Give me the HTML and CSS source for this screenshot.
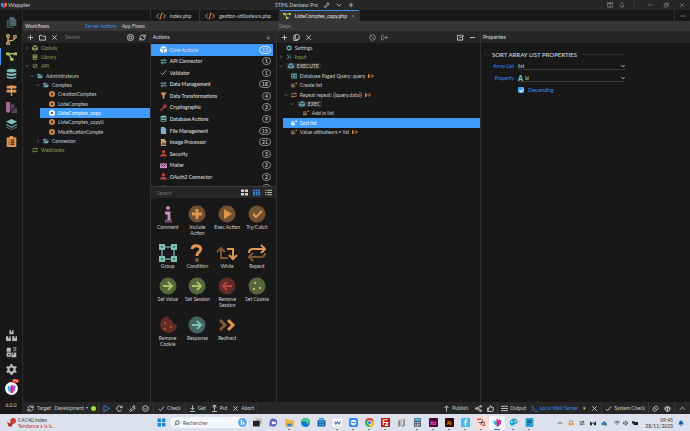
FILE: index.html
```html
<!DOCTYPE html>
<html lang="en">
<head>
    <meta charset="UTF-8">
    <meta name="viewport" content="width=device-width, initial-scale=1.0">
    <title>Wappler</title>
    <link rel="stylesheet" href="styles.css">
</head>
<body>
    <svg class="sprite" aria-hidden="true">
        <symbol id="plus" viewBox="0 0 16 16"><path d="M8 2v12M2 8h12"/></symbol>
        <symbol id="close" viewBox="0 0 16 16"><path d="M3 3l10 10M13 3L3 13"/></symbol>
        <symbol id="minus" viewBox="0 0 16 16"><path d="M2 8h12"/></symbol>
        <symbol id="down" viewBox="0 0 16 16"><path d="M2 5l6 6 6-6"/></symbol>
        <symbol id="right" viewBox="0 0 16 16"><path d="M5 2l6 6-6 6"/></symbol>
        <symbol id="up" viewBox="0 0 16 16"><path d="M2 11l6-6 6 6"/></symbol>
        <symbol id="check" viewBox="0 0 16 16"><path d="M2 9l4 4 8-10"/></symbol>
        <symbol id="pencil" viewBox="0 0 16 16"><path d="M2 14l1-4 8-8 3 3-8 8zM9 4l3 3"/></symbol>
        <symbol id="copy" viewBox="0 0 16 16"><path d="M5 1h6l3 3v8H5zM5 4H2v11h8v-3"/></symbol>
        <symbol id="refresh" viewBox="0 0 16 16"><path d="M2 8a6 6 0 0 1 11-3M14 1v5H9M14 8a6 6 0 0 1-11 3M2 15v-5h5"/></symbol>
        <symbol id="redo" viewBox="0 0 16 16"><path d="M13 11a6 6 0 1 1-1-7M14 1v5H9"/></symbol>
        <symbol id="folder" viewBox="0 0 16 16"><path d="M1 3h5l2 2h7v9H1z"/></symbol>
        <symbol id="folder-open" viewBox="0 0 16 16"><path class="fill" d="M1 2h5l2 2h5v2H4l-3 6zM4 7h12l-3 7H1z"/></symbol>
        <symbol id="target" viewBox="0 0 16 16"><circle cx="8" cy="8" r="7"/><circle cx="8" cy="8" r="3"/></symbol>
        <symbol id="code" viewBox="0 0 20 16"><path d="M6 3L1 8l5 5M14 3l5 5-5 5M12 1L8 15"/></symbol>
        <symbol id="flow" viewBox="0 0 16 16"><path class="fill" d="M0 2h5v4H0zM11 2h5v4h-5zM6 10h5v4H6z"/><path d="M5 4h6M4 5l4 6"/></symbol>
        <symbol id="cube" viewBox="0 0 16 16"><path class="fill" d="M8 0l7 3-7 3-7-3zM0 5l7 3v8l-7-4zM16 5v7l-7 4V8z"/></symbol>
        <symbol id="swap" viewBox="0 0 16 16"><path d="M1 5h12M10 2l3 3-3 3M15 11H3M6 8l-3 3 3 3"/></symbol>
        <symbol id="loop" viewBox="0 0 16 16"><path d="M1 8V6q0-2 3-2h10M11 1l3 3-3 3M15 8v2q0 2-3 2H2M5 9l-3 3 3 3"/></symbol>
        <symbol id="book" viewBox="0 0 16 16"><path class="fill" fill-rule="evenodd" d="M2 1h12v14H2zM5 4v2h7V4zM4 11v2h9v-2z"/></symbol>
        <symbol id="play" viewBox="0 0 16 16"><circle class="fill" cx="8" cy="8" r="8"/><path class="hole" d="M6 4l6 4-6 4z"/></symbol>
        <symbol id="db" viewBox="0 0 16 16"><path class="fill" d="M1 3q7-4 14 0v2q-7 3-14 0zM1 7q7 3 14 0v3q-7 3-14 0zM1 12q7 3 14 0v2q-7 3-14 0z"/></symbol>
        <symbol id="user" viewBox="0 0 16 16"><circle class="fill" cx="8" cy="4" r="4"/><path class="fill" d="M0 15q0-6 5-6h6q5 0 5 6z"/></symbol>
        <symbol id="list" viewBox="0 0 16 16"><path d="M0 3h3M5 3h11M0 8h3M5 8h11M0 13h3M5 13h11"/></symbol>
        <symbol id="menu" viewBox="0 0 16 16"><path d="M0 3h16M0 8h16M0 13h16"/></symbol>
        <symbol id="step" viewBox="0 0 16 16"><path class="fill" d="M0 4h9v2H0zM0 7h11v3H0zM0 11h11v3H0zM12 1h4v4h-4z"/></symbol>
        <symbol id="out" viewBox="0 0 16 16"><path class="fill" d="M0 3h4v10H0z"/><path d="M5 8h9M10 3l5 5-5 5"/></symbol>
        <symbol id="gear" viewBox="0 0 16 16"><circle cx="8" cy="8" r="4.500" class="thick"/><path class="thick" d="M8 0v3M8 13v3M1 4l3 2M12 10l3 2M1 12l3-2M12 6l3-2"/></symbol>
        <symbol id="arrow" viewBox="0 0 18 18"><circle class="fill" cx="9" cy="9" r="8.500" opacity=".45"/><path d="M4 9h9M9 5l4 4-4 4"/></symbol>
    </svg>

    <header class="titlebar">
        <div class="brand">
            <svg class="logo" viewBox="0 0 16 16"><path fill="#29b6f6" d="M0 2l7 3v10l-6-4z"/><path fill="#e91e63" d="M6 1l5 3v10l-4 2z"/><path fill="#ff9800" d="M11 1l5 3-1 8-4 2z"/></svg>
            Wappler
        </div>
        <div class="project">
            STIHL Deviseur Pro
            <button aria-label="Edit project"><svg><use href="#pencil"/></svg></button>
            <button aria-label="Projects"><svg><use href="#down"/></svg></button>
            <button aria-label="New project"><svg><use href="#plus"/></svg></button>
        </div>
        <div class="window-buttons">
            <button aria-label="Layout"><svg viewBox="0 0 16 16"><path d="M1 2h14v12H1zM8 2v12M1 4h14"/></svg></button>
            <button aria-label="Theme"><svg viewBox="0 0 16 16"><path d="M8 1q6 6 4 11-4 5-8 0-2-5 4-11zM6 11q2 2 4 0"/></svg></button>
            <button aria-label="More"><svg viewBox="0 0 16 16"><path d="M8 2v2M8 7v2M8 12v2"/></svg></button>
            <button aria-label="Minimize"><svg><use href="#minus"/></svg></button>
            <button aria-label="Restore"><svg viewBox="0 0 16 16"><path d="M3 6h8v7H3zM6 6V3h8v7h-3"/></svg></button>
            <button aria-label="Close"><svg><use href="#close"/></svg></button>
        </div>
    </header>

    <div class="app">
        <nav class="sidebar">
            <button aria-label="Files" class="slate"><svg viewBox="0 0 16 16"><path class="fill" opacity=".5" d="M1 4h3v10h8v2H1z"/><path class="fill" opacity=".7" d="M5 0h6l4 4v9H5z"/></svg></button>
            <button aria-label="Git" class="sand"><svg viewBox="0 0 16 16"><circle cx="3" cy="3" r="2"/><circle cx="13" cy="4" r="2"/><circle cx="3" cy="14" r="2"/><path d="M3 5v7M3 10q9 0 10-4"/></svg></button>
            <button aria-label="Workflows" class="lime active"><svg><use href="#flow"/></svg></button>
            <button aria-label="Databases" class="teal"><svg><use href="#db"/></svg></button>
            <button aria-label="Routes" class="orange"><svg viewBox="0 0 16 16"><path class="fill" d="M1 1h13l2 2-2 2H1zM2 7h13v4H2L0 9zM7 0h2v16H7z"/></svg></button>
            <button aria-label="Styles" class="purple"><svg viewBox="0 0 16 16"><path class="fill" d="M0 0h6v14q-3 3-6 0z"/><path class="fill" opacity=".5" d="M7 4l3-2 3 4-6 7zM13 9h3v7H7z"/></svg></button>
            <button aria-label="Layers" class="teal"><svg viewBox="0 0 16 16"><path class="fill" d="M8 0l8 4-8 4-8-4z"/><path class="fill" opacity=".7" d="M0 7l8 4 8-4v2l-8 4-8-4zM0 11l8 4 8-4v1l-8 4-8-4z"/></svg></button>
            <button aria-label="Tasks" class="orange"><svg viewBox="0 0 16 16"><path class="fill" d="M1 2h4l1-2h4l1 2h4v14H1z"/><path stroke="#4a2c10" d="M4 6h1M7 6h5M4 9h1M7 9h5M4 12h1M7 12h5"/></svg></button>
            <button aria-label="Extensions" class="gray bottom"><svg viewBox="0 0 16 16"><path class="fill" d="M5 0h6v6H5zM0 9h7v7H0zM9 9h7v7H9z"/><path stroke="#181818" d="M8 0v3M4 9v3M13 9v3"/></svg></button>
            <button aria-label="Updates" class="gray"><svg viewBox="0 0 16 16"><path class="fill" d="M1 1h6v6H1zM1 8h6v6H1zM8 8h7v7H8z"/><path opacity=".6" d="M10 1h4v4h-4"/><path stroke="#181818" d="M11 8v3M4 10v2"/></svg></button>
            <button aria-label="Settings" class="gray"><svg><use href="#gear"/></svg></button>
            <button aria-label="Account" class="account"><svg viewBox="0 0 16 16"><circle cx="8" cy="8" r="8" fill="#fff" stroke="none"/><path fill="#29b6f6" stroke="none" d="M3 4l4 2v7l-3-2z"/><path fill="#e91e90" stroke="none" d="M7 3l3 2v8l-3 1z"/><path fill="#7b5cff" stroke="none" d="M10 4l3 1-1 6-2 1z"/></svg><span class="badge">Pro</span></button>
            <span class="version">6.0.0</span>
        </nav>

        <div class="workspace">
            <div class="columns">
                <section class="workflows">
                    <div class="tabs"></div>
                    <div class="strip">
                        <b>Workflows</b>
                        <a href="#" class="link push">Server Actions</a>
                        <a href="#">App Flows</a>
                    </div>
                    <div class="toolbar">
                        <button aria-label="Add"><svg><use href="#plus"/></svg></button>
                        <button aria-label="New folder"><svg><use href="#folder"/></svg></button>
                        <button aria-label="Delete"><svg><use href="#close"/></svg></button>
                        <input type="text" placeholder="Search" aria-label="Search workflows">
                        <button aria-label="Settings"><svg><use href="#target"/></svg></button>
                        <button aria-label="Refresh"><svg><use href="#refresh"/></svg></button>
                    </div>
                    <ul class="tree files">
                        <li class="green"><svg class="caret"><use href="#right"/></svg><svg><use href="#cube"/></svg>Globals</li>
                        <li class="green"><i class="caret"></i><svg><use href="#book"/></svg>Library</li>
                        <li class="green"><svg class="caret"><use href="#down"/></svg><svg><use href="#swap"/></svg>API</li>
                        <li class="level1 dir"><svg class="caret"><use href="#down"/></svg><svg><use href="#folder-open"/></svg>Adminitrateurs</li>
                        <li class="level2 dir"><svg class="caret"><use href="#down"/></svg><svg><use href="#folder-open"/></svg>Comptes</li>
                        <li class="level3 action"><i class="caret"></i><svg><use href="#play"/></svg>CreationComptes</li>
                        <li class="level3 action"><i class="caret"></i><svg><use href="#play"/></svg>ListeComptes</li>
                        <li class="level3 action selected"><i class="caret"></i><svg><use href="#play"/></svg>ListeComptes_copy</li>
                        <li class="level3 action"><i class="caret"></i><svg><use href="#play"/></svg>ListeComptes_copy0</li>
                        <li class="level3 action"><i class="caret"></i><svg><use href="#play"/></svg>ModificationCompte</li>
                        <li class="level2 dir"><svg class="caret"><use href="#right"/></svg><svg><use href="#folder-open"/></svg>Connexion</li>
                        <li class="green"><i class="caret"></i><svg><use href="#loop"/></svg>Webhooks</li>
                    </ul>
                </section>

                <div class="editor">
                    <div class="tabs">
                        <button class="tab"><svg><use href="#code"/></svg>index.php</button>
                        <button class="tab"><svg><use href="#code"/></svg>gestion-utilisateurs.php</button>
                        <button class="tab active"><svg><use href="#flow"/></svg>ListeComptes_copy.php<svg class="x"><use href="#close"/></svg></button>
                        <button class="more" aria-label="More tabs"><svg viewBox="0 0 16 16"><path d="M1 8h3M6 8h3M11 8h3"/></svg></button>
                    </div>
                    <div class="panels">
                        <section class="actions">
                            <div class="strip"></div>
                            <div class="toolbar title"><b>Actions</b><button class="push collapse" aria-label="Collapse">«</button></div>
                            <div class="group-list">
                                <ul class="groups">
                                    <li class="selected"><svg><use href="#cube"/></svg>Core Actions<span>15</span></li>
                                    <li class="teal"><svg><use href="#swap"/></svg>API Connector<span>1</span></li>
                                    <li class="teal"><svg><use href="#check"/></svg>Validator<span>1</span></li>
                                    <li class="teal"><svg><use href="#swap"/></svg>Data Management<span>18</span></li>
                                    <li class="orange"><svg viewBox="0 0 16 16"><path class="fill" d="M1 1h14l-5 7v8l-4-2V8z"/></svg>Data Transformations<span>4</span></li>
                                    <li class="red"><svg viewBox="0 0 16 16"><circle cx="11" cy="5" r="3" class="thick"/><path class="thick" d="M8 8l-7 7"/></svg>Cryptographic<span>3</span></li>
                                    <li class="teal"><svg><use href="#db"/></svg>Database Actions<span>9</span></li>
                                    <li class="blue"><svg viewBox="0 0 16 16"><path class="fill" d="M2 0h8l4 5v11H2z"/></svg>File Management<span>15</span></li>
                                    <li class="sand"><svg viewBox="0 0 16 16"><path class="fill" d="M2 0h8l4 5v11H2z"/><path stroke="#5a4420" d="M4 13l3-4 2 2 2-3 2 5zM5 5h1"/></svg>Image Processor<span>21</span></li>
                                    <li class="red"><svg><use href="#user"/></svg>Security<span>3</span></li>
                                    <li class="pink"><svg viewBox="0 0 16 16"><path class="fill" d="M0 3h16v11H0z"/><path stroke="#3a2338" d="M1 4l7 6 7-6"/></svg>Mailer<span>2</span></li>
                                    <li class="red"><svg><use href="#user"/></svg>OAuth2 Connector<span>2</span></li>
                                    <li class="red"><svg><use href="#redo"/></svg>reCAPTCHA Actions<span>1</span></li>
                                </ul>
                            </div>
                            <div class="toolbar filter">
                                <input type="text" placeholder="Search" aria-label="Search actions">
                                <button aria-label="Large icons"><svg viewBox="0 0 16 16"><path class="fill" d="M0 1h7v6H0zM9 1h7v6H9zM0 9h7v6H0zM9 9h7v6H9z"/></svg></button>
                                <button aria-label="Small icons" class="link"><svg viewBox="0 0 16 16"><path class="fill" d="M0 1h4v4H0zM6 1h4v4H6zM12 1h4v4h-4zM0 6h4v4H0zM6 6h4v4H6zM12 6h4v4h-4zM0 11h4v4H0zM6 11h4v4H6zM12 11h4v4h-4z"/></svg></button>
                                <button aria-label="List"><svg><use href="#list"/></svg></button>
                            </div>
                            <div class="palette">
                                <button class="pink"><svg viewBox="0 0 18 18"><circle class="fill" cx="9" cy="3" r="2"/><path class="thick" d="M6 8h4v7"/><path d="M6 16h7" class="thick" opacity=".5"/></svg>Comment</button>
                                <button class="orange"><svg viewBox="0 0 18 18"><circle class="fill" cx="9" cy="9" r="8.500" opacity=".45"/><path class="thick" d="M9 4v10M4 9h10"/></svg>Include Action</button>
                                <button class="orange"><svg viewBox="0 0 18 18"><circle class="fill" cx="9" cy="9" r="8.500" opacity=".45"/><path class="fill" d="M6 4l8 5-8 5z"/></svg>Exec Action</button>
                                <button class="orange"><svg viewBox="0 0 18 18"><circle class="fill" cx="9" cy="9" r="8.500" opacity=".45"/><path d="M5 9l3 3 6-6"/></svg>Try/Catch</button>
                                <button class="teal"><svg viewBox="0 0 18 18"><path opacity=".6" d="M3 3h12v12H3z"/><path class="fill" fill-rule="evenodd" d="M0 0h6v6H0zM2 2v2h2V2zM12 0h6v6h-6zM14 2v2h2V2zM0 12h6v6H0zM2 14v2h2v-2zM12 12h6v6h-6zM14 14v2h2v-2z"/></svg>Group</button>
                                <button class="orange"><svg viewBox="0 0 18 18"><path class="thick" d="M4 5q1-4 6-3 5 2 1 6-2 1-2 4"/><circle class="fill" cx="9" cy="16" r="2" opacity=".5"/></svg>Condition</button>
                                <button class="orange"><svg class="while" viewBox="0 0 22 18"><path opacity=".5" d="M1 8l4-4 4 4M5 5v9h7"/><path d="M11 5h6v9M13 11l4 4 4-4"/></svg>While</button>
                                <button class="orange"><svg viewBox="0 0 18 18"><path d="M1 9q0-4 4-4h11M13 1l4 4-4 4"/><path opacity=".5" d="M17 9q0 4-4 4H2M5 9l-4 4 4 4"/></svg>Repeat</button>
                                <button class="lime"><svg><use href="#arrow"/></svg>Set Value</button>
                                <button class="lime"><svg><use href="#arrow"/></svg>Set Session</button>
                                <button class="red"><svg viewBox="0 0 18 18"><circle class="fill" cx="9" cy="9" r="8.500" opacity=".45"/><path d="M14 9H5M9 5L5 9l4 4"/></svg>Remove Session</button>
                                <button class="lime"><svg viewBox="0 0 18 18"><circle class="fill" cx="9" cy="9" r="8.500" opacity=".45"/><path class="fill" d="M6 5h2v2H6zM5 11h2v2H5zM11 10h2v2h-2z"/></svg>Set Cookie</button>
                                <button class="red"><svg viewBox="0 0 18 18"><path class="fill" opacity=".45" d="M9 0q1 4 4 4 0 4 5 5a8.500 8.500 0 1 1-9-9z"/><path class="fill" d="M5 6h2v2H5zM5 12h2v2H5zM11 10h2v2h-2z"/></svg>Remove Cookie</button>
                                <button class="teal"><svg><use href="#arrow"/></svg>Response</button>
                                <button class="orange"><svg viewBox="0 0 18 18"><path opacity=".5" d="M2 4l5 5-5 5" class="thick"/><path d="M10 4l5 5-5 5" class="thick"/></svg>Redirect</button>
                            </div>
                        </section>

                        <section class="steps">
                            <div class="strip muted">Steps</div>
                            <div class="toolbar">
                                <button aria-label="Add step"><svg><use href="#plus"/></svg></button>
                                <button aria-label="Copy"><svg><use href="#copy"/></svg></button>
                                <button aria-label="Delete step"><svg><use href="#close"/></svg></button>
                                <div class="middle">
                                    <button aria-label="Disable" class="dim"><svg viewBox="0 0 16 16"><circle cx="8" cy="8" r="6.500"/><path d="M3 3l10 10"/></svg></button>
                                    <button aria-label="Output" class="dim"><svg viewBox="0 0 16 16"><path d="M7 3H1v10h6M5 8h10M11 4l4 4-4 4"/></svg></button>
                                </div>
                                <button aria-label="Open in browser"><svg viewBox="0 0 16 16"><path d="M9 3H1v11h12V9M6 10q1-4 8-5M11 1l4 4-4 4"/></svg></button>
                                <button aria-label="Collapse steps"><svg><use href="#minus"/></svg></button>
                            </div>
                            <ul class="tree">
                                <li class="cyan"><i class="caret"></i><svg><use href="#gear"/></svg>Settings</li>
                                <li class="cyan input"><svg class="caret"><use href="#right"/></svg><svg viewBox="0 0 16 16"><path d="M2 2l6 6-6 6M8 2l6 6-6 6"/></svg><span>Input</span></li>
                                <li class="cyan"><svg class="caret"><use href="#down"/></svg><span class="chip"><svg><use href="#cube"/></svg>EXECUTE</span></li>
                                <li class="cyan level1"><i class="caret"></i><svg viewBox="0 0 16 16"><path d="M1 2h14v12H1zM1 4h14M1 9h14M6 4v10M10 4v10"/></svg>Database Paged Query: query<svg class="out"><use href="#out"/></svg></li>
                                <li class="brown level1"><i class="caret"></i><svg><use href="#step"/></svg>Create list</li>
                                <li class="orange-icon level1"><svg class="caret"><use href="#down"/></svg><svg><use href="#loop"/></svg>Repeat repeat: {{query.data}}<svg class="out"><use href="#out"/></svg></li>
                                <li class="cyan level2"><svg class="caret"><use href="#down"/></svg><span class="chip"><svg><use href="#cube"/></svg>EXEC</span></li>
                                <li class="brown level3"><i class="caret"></i><svg><use href="#step"/></svg>Add in list</li>
                                <li class="brown level1 selected"><i class="caret"></i><svg><use href="#step"/></svg>Sort list</li>
                                <li class="brown level1"><i class="caret"></i><svg><use href="#step"/></svg>Value utilisateurs = list<svg class="out"><use href="#out"/></svg></li>
                            </ul>
                        </section>

                        <section class="properties">
                            <div class="strip"></div>
                            <div class="toolbar title"><b>Properties</b></div>
                            <form class="form">
                                <h2>SORT ARRAY LIST PROPERTIES</h2>
                                <div class="field">
                                    <label for="array-list">Array List</label>
                                    <div class="select"><select id="array-list"><option>list</option></select><svg><use href="#down"/></svg></div>
                                </div>
                                <div class="field">
                                    <label for="property">Property</label>
                                    <div class="select"><b class="type">A</b><select id="property"><option>id</option></select><svg><use href="#down"/></svg></div>
                                </div>
                                <div class="field">
                                    <input type="checkbox" id="descending" checked>
                                    <label for="descending">Descending</label>
                                </div>
                            </form>
                        </section>
                    </div>
                </div>
            </div>

            <footer class="statusbar">
                <div class="cell target">
                    <button aria-label="Refresh target"><svg><use href="#refresh"/></svg></button>
                    <button>Target: &nbsp;Development <small>▾</small></button>
                    <i class="dot"></i>
                </div>
                <div class="cell tools">
                    <button aria-label="Run" class="link"><svg viewBox="0 0 16 16"><path d="M2 1l13 7-13 7z"/></svg></button>
                    <button aria-label="Redo"><svg><use href="#redo"/></svg></button>
                    <button aria-label="Build"><svg viewBox="0 0 16 16"><path d="M1 13l7-7q0-4 5-4l-2 3 3 2q0 3-4 3l-7 5z"/></svg></button>
                    <button aria-label="Validate"><svg viewBox="0 0 16 16"><circle cx="8" cy="8" r="6.500"/><path d="M5 8l2 2 4-4"/></svg></button>
                </div>
                <div class="cell"><button><svg><use href="#check"/></svg>Check</button></div>
                <div class="cell compact">
                    <button><svg viewBox="0 0 16 16"><path d="M8 1v10M4 7l4 4 4-4M2 15h12"/></svg>Get</button>
                    <button><svg viewBox="0 0 16 16"><path d="M8 13V3M4 6l4-4 4 4M2 15h12M4 1h8"/></svg>Put</button>
                    <button><svg><use href="#close"/></svg>Abort</button>
                </div>
                <div class="cell push"><button><svg viewBox="0 0 16 16"><path d="M8 15V2M3 7l5-5 5 5"/></svg>Publish</button></div>
                <div class="cell compact">
                    <button aria-label="Share"><svg viewBox="0 0 16 16"><path d="M13 2L3 8l10 6M7 6l5 4"/><circle cx="13" cy="3" r="2"/><circle cx="3" cy="8" r="2"/><circle cx="13" cy="13" r="2"/></svg></button>
                    <button aria-label="Like"><svg viewBox="0 0 16 16"><path d="M1 7h3v8H1zM4 8l4-7q3 0 1 5h6l-2 9H4"/></svg></button>
                </div>
                <div class="cell compact">
                    <button><svg><use href="#menu"/></svg>Output</button>
                    <button class="link"><svg viewBox="0 0 16 16"><path d="M1 2l6 6-6 6M8 14h8"/></svg>Local Web Server</button>
                    <button aria-label="Servers">▾</button>
                    <button aria-label="Close server"><svg><use href="#close"/></svg></button>
                </div>
                <div class="cell compact"><button><svg><use href="#check"/></svg>System Check</button></div>
                <div class="cell compact">
                    <button aria-label="Clear"><svg viewBox="0 0 16 16"><path d="M1 9l8-7 6 5-7 7H5zM5 6l6 5"/></svg></button>
                    <button aria-label="Debug"><svg viewBox="0 0 16 16"><path d="M4 5h8v8q-4 4-8 0zM5 5q0-4 6 0M1 4l3 3M15 4l-3 3M0 9h4M12 9h4M8 6v9"/></svg></button>
                </div>
                <div class="cell"><button aria-label="Expand"><svg><use href="#up"/></svg></button></div>
            </footer>
        </div>
    </div>

    <div class="taskbar">
        <div class="widget">
            <svg viewBox="0 0 16 16"><path fill="#b3261e" d="M0 6l5 4 3-5 3 4-3 6H3z"/><circle cx="11" cy="5" r="5" fill="#d13a30"/></svg>
            <div>CAC40 index<br><span>Tendance à la b...</span></div>
        </div>
        <div class="dock">
            <button aria-label="Start"><svg viewBox="0 0 16 16"><path fill="#1683d8" d="M1 1h6v6H1zM9 1h6v6H9zM1 9h6v6H1zM9 9h6v6H9z"/></svg></button>
            <label class="search"><svg viewBox="0 0 16 16"><circle cx="9" cy="7" r="5" fill="none" stroke="#333" stroke-width="2"/><path stroke="#333" stroke-width="2" d="M5 11l-4 4"/></svg><input type="text" placeholder="Rechercher" aria-label="Rechercher"><svg viewBox="0 0 16 16"><circle cx="8" cy="8" r="8" fill="#58a8ea"/><path fill="none" stroke="#fff" stroke-width="2" d="M6 3v8l5-1-3-3"/></svg></label>
            <button aria-label="Task view"><svg viewBox="0 0 16 16"><path fill="#bbb" d="M5 1h11v9H5z"/><path fill="#222" d="M0 5h12v10H0z"/></svg></button>
            <button aria-label="Chat"><svg viewBox="0 0 16 16"><path fill="#5b5fc7" d="M8 1a7 7 0 1 1-4 13l-3 1V8a7 7 0 0 1 7-7z"/><path fill="#fff" d="M5 6h4v5H5zM9 7l3-1v5l-3-1z"/></svg></button>
            <button aria-label="Explorer" class="open"><svg viewBox="0 0 16 16"><path fill="#f3b63c" d="M0 2h6l2 2h8v11H0z"/><path fill="#2b86d9" d="M4 10h8v5H4z"/></svg></button>
            <button aria-label="Edge"><svg viewBox="0 0 16 16"><circle cx="8" cy="8" r="8" fill="#1479c9"/><path fill="#44cf8d" d="M8 0a8 8 0 0 1 8 8q-2 3-6 2 1-5-5-4-3 0-4 2a8 8 0 0 1 7-8z"/></svg></button>
            <button aria-label="Store"><svg viewBox="0 0 16 16"><path fill="#135aa5" d="M1 4h14v11H1z"/><path fill="none" stroke="#239bea" stroke-width="2" d="M5 4V1h6v3"/><path fill="#4fc3f7" d="M4 6h3v3H4zM9 6h3v3H9zM4 10h3v3H4zM9 10h3v3H9z"/></svg></button>
            <button aria-label="Mail" class="open"><svg viewBox="0 0 16 16"><path fill="#fff" d="M0 1h16v14H0z"/><path fill="none" stroke="#426fb0" stroke-width="2" d="M3 6l2 5 3-4 3 4 2-5"/></svg></button>
            <button aria-label="Teamviewer" class="open"><svg viewBox="0 0 16 16"><rect width="16" height="16" rx="4" fill="#2689f2"/><circle cx="8" cy="8" r="5" fill="#fff"/><path fill="#2689f2" d="M4 7h8v2H4z"/></svg></button>
            <button aria-label="Chrome" class="open"><svg viewBox="0 0 16 16"><circle cx="8" cy="8" r="8" fill="#34a853"/><path fill="#ea4335" d="M1 4a8 8 0 0 1 14 0l-7 4z"/><path fill="#fbbc05" d="M8 8l7-4a8 8 0 0 1-7 12z"/><circle cx="8" cy="8" r="4" fill="#fff"/><circle cx="8" cy="8" r="3" fill="#4285f4"/></svg></button>
            <button aria-label="FileZilla" class="open"><svg viewBox="0 0 16 16"><path fill="#b8120c" d="M0 0h16v16H0z"/><path fill="none" stroke="#fff" stroke-width="2" d="M4 13V3h8M4 8h8l-4 5h5"/></svg></button>
            <button aria-label="Drives"><svg viewBox="0 0 16 16"><path fill="#888" d="M2 5l4-2v12H2zM8 2h6v13H8z"/><path fill="#eee" d="M9 3h2v10H9z"/></svg></button>
            <button aria-label="Calculator" class="open"><svg viewBox="0 0 16 16"><path fill="#4b5663" d="M2 0h12v16H2z"/><path fill="#4cc2ee" d="M3 1h10v4H3z"/><path stroke="#ddd" stroke-width="2" stroke-dasharray="2 1" d="M4 8h8M4 11h8M4 14h8"/></svg></button>
            <button class="open adobe xd">Xd</button>
            <button class="open adobe ai">Ai</button>
            <button aria-label="Fonts" class="open"><svg viewBox="0 0 16 16"><path fill="#45b8ec" d="M0 0h16v16H0z"/><path fill="none" stroke="#fff" stroke-width="2" d="M11 3q-3-1-3 3v8M5 7h6"/></svg></button>
            <button aria-label="Snipping tool" class="open snip"><svg viewBox="0 0 16 16"><path fill="none" stroke="#d34b3e" stroke-width="2" d="M2 5V2h6M13 6v7H9"/><path stroke="#555" stroke-width="2" d="M3 8l9 0M10 3l-3 9"/></svg></button>
            <button aria-label="Wappler" class="open current"><svg viewBox="0 0 16 16"><path fill="#29b6f6" d="M1 4l6 2v8l-5-3z"/><path fill="#e91e63" d="M6 1l5 4v9l-4 2z"/><path fill="#8e44dd" d="M11 2l4 3-1 6-3 2z"/></svg></button>
            <button aria-label="Paint" class="open"><svg viewBox="0 0 16 16"><path fill="#1ba1d8" d="M8 1q8 0 7 7-1 3-4 2-3 5-8 3-5-8 5-12z"/><path fill="#ffb74d" d="M9 5l6-3-4 7z"/><circle cx="5" cy="7" r="1.500" fill="#fff"/></svg></button>
            <button aria-label="Notepad" class="open"><svg viewBox="0 0 16 16"><path fill="#2aa9d6" d="M1 0h14v16H1z"/><path stroke="#0c5a88" stroke-width="2" d="M4 5h8M4 8h8M4 11h5"/></svg></button>
        </div>
        <div class="tray">
            <svg class="line"><use href="#up"/></svg>
            <svg viewBox="0 0 16 16"><path fill="none" stroke="#777" stroke-width="2" d="M3 7q0-5 5-5t5 4"/><path fill="#ef8a17" d="M2 8h6v6H2zM10 7h5v7h-5z"/></svg>
            <svg class="line"><use href="#swap"/></svg>
            <svg viewBox="0 0 16 16"><path fill="#222" d="M0 3l5 4h6l5-4v11h-5V9H5v5H0z"/></svg>
            <svg viewBox="0 0 16 16"><path fill="#1784d8" d="M2 13q-4-5 2-6 2-6 7-3 5 4 4 9z"/><path fill="#6b7280" d="M8 9h7v6H8z"/></svg>
            <div class="network">
                <svg class="line" viewBox="0 0 16 16"><path d="M1 6q7-6 14 0M4 9q4-4 8 0M7 12h2"/></svg>
                <svg class="line" viewBox="0 0 16 16"><path d="M1 6h3l4-4v12l-4-4H1zM11 5q3 3 0 6"/></svg>
                <svg viewBox="0 0 16 16"><path fill="#222" d="M0 3h7v2h9v8H4V9H0z"/></svg>
            </div>
            <div class="clock">09:45<br>28/11/2023</div>
            <svg viewBox="0 0 16 16"><path fill="#1261a8" d="M8 1q5 0 5 6l2 5H1l2-5q0-6 5-6zM6 13h4v2H6z"/></svg>
        </div>
    </div>
</body>
</html>
```

FILE: styles.css
```css
* {
    box-sizing: border-box;
}
body {
    font-family: 'Lato', 'Open Sans', sans-serif;
    font-size: 5px;
    line-height: 6px;
    display: flex;
    flex-direction: column;
    height: 100vh;
    margin: 0;
    background: #181818;
    color: #d0d0d0;
    overflow: hidden;
}
button, input, select {
    font: inherit;
    color: inherit;
    background: none;
    border: none;
    margin: 0;
    padding: 0;
    min-width: 0;
    outline: none;
}
button {
    display: flex;
    align-items: center;
    gap: 2px;
    white-space: nowrap;
    cursor: pointer;
}
a {
    color: inherit;
    text-decoration: none;
}
ul {
    list-style: none;
    margin: 0;
    padding: 0;
}
b {
    font-weight: 600;
}
svg {
    width: 8px;
    height: 8px;
    flex: none;
    fill: none;
    stroke: currentColor;
    stroke-width: 2;
}
.sprite {
    display: none;
}
.fill {
    fill: currentColor;
    stroke: none;
}
.hole {
    fill: #181818;
    stroke: none;
}
.thick {
    stroke-width: 3;
}
.push {
    margin-left: auto;
}

/* colours */
.slate { color: #66858c; }
.sand { color: #d0a468; }
.lime { color: #a8c468; }
.teal { color: #7cc0b8; }
.orange { color: #e09550; }
.purple { color: #a06a98; }
.pink { color: #c88cc0; }
.red { color: #b8443c; }
.blue { color: #7fb0d0; }
.gray { color: #bcbcbc; }
.dim { color: #909090; }
.link { color: #3b8eea; }

/* title bar */
.titlebar {
    display: grid;
    grid-template-columns: 9fr auto 11fr;
    align-items: center;
    height: 10px;
    background: #262626;
    flex: none;
}
.titlebar svg {
    width: 6px;
    height: 6px;
}
.brand {
    display: flex;
    align-items: center;
    gap: 1px;
    padding-left: 1px;
    font-size: 6px;
}
.brand .logo {
    stroke: none;
}
.project {
    display: flex;
    align-items: center;
    gap: 6px;
}
.window-buttons {
    display: flex;
    justify-content: flex-end;
    gap: 10px;
    padding-right: 5px;
}
.window-buttons button:nth-child(2) {
    margin: 0 -4px;
}
.window-buttons svg {
    stroke-width: 1;
}

/* left icon bar */
.app {
    display: flex;
    flex: 1;
    min-height: 0;
}
.sidebar {
    display: flex;
    flex-direction: column;
    width: 22px;
    padding-top: 4px;
    flex: none;
}
.sidebar button {
    position: relative;
    justify-content: center;
    height: 17px;
}
.sidebar svg {
    width: 11px;
    height: 11px;
}
.sidebar .active {
    box-shadow: inset 1px 0 #3f9bfa;
}
.sidebar .bottom {
    margin-top: auto;
}
.sidebar .account {
    height: 21px;
}
.sidebar .account svg {
    width: 13px;
    height: 13px;
}
.badge {
    position: absolute;
    top: 1px;
    right: 3px;
    padding: 0 1px;
    border-radius: 2px;
    background: #d93025;
    color: #fff;
    font-size: 3px;
    line-height: 4px;
}
.version {
    line-height: 12px;
    margin-bottom: 3px;
    text-align: center;
}

/* panels */
.workspace {
    display: flex;
    flex-direction: column;
    flex: 1;
    min-width: 0;
    border-left: 1px solid #2c2c2c;
}
.columns {
    display: flex;
    flex: 1;
    min-height: 0;
}
.workflows {
    flex: 127 1 0;
    min-width: 0;
}
.editor {
    display: flex;
    flex-direction: column;
    flex: 540 1 0;
    min-width: 0;
    border-left: 1px solid #303030;
}
.panels {
    display: flex;
    flex: 1;
    min-height: 0;
}
.actions {
    display: flex;
    flex-direction: column;
    flex: 125 1 0;
    min-width: 0;
}
.steps {
    flex: 203 1 0;
    min-width: 0;
    border-left: 1px solid #303030;
}
.properties {
    flex: 209 1 0;
    min-width: 0;
    border-left: 1px solid #303030;
}
.tabs {
    display: flex;
    height: 11px;
    flex: none;
}
.tab {
    gap: 4px;
    padding: 0 8px 0 5px;
    border-right: 1px solid #303030;
}
.tab svg {
    width: 10px;
    height: 8px;
    color: #d88a48;
}
.tab.active {
    padding: 0 4px 0 3px;
    background: #333;
    box-shadow: inset 0 1px #3b8eea;
    color: #e8e8e8;
}
.tab.active svg {
    width: 8px;
    color: #a8c468;
}
.tab.active .x {
    width: 4px;
    height: 4px;
    color: #999;
}
.more {
    justify-content: center;
    width: 16px;
    margin-left: auto;
    border-left: 1px solid #303030;
}
.more svg {
    width: 6px;
}
.strip {
    display: flex;
    align-items: center;
    gap: 5px;
    height: 10px;
    padding: 0 5px 0 2px;
    background: #363636;
    flex: none;
}
.strip.muted {
    color: #8a8a8a;
}
.toolbar {
    display: flex;
    align-items: center;
    gap: 5px;
    height: 12px;
    padding: 0 4px;
    background: #262626;
    flex: none;
}
.toolbar.title {
    padding: 0 6px 0 2px;
}
.collapse {
    font-size: 7px;
}
.toolbar svg {
    width: 7px;
    height: 7px;
}
.toolbar input {
    flex: 1;
    padding-left: 2px;
}
.toolbar input::placeholder {
    color: #777;
}
.middle {
    display: flex;
    justify-content: center;
    gap: 5px;
    flex: 1;
    padding-right: 12px;
}

/* trees */
.tree {
    display: grid;
    grid-auto-rows: 1fr;
    height: 94px;
}
.tree.files {
    height: 112px;
}
.tree li {
    display: flex;
    align-items: center;
    gap: 3px;
    padding-left: 2px;
    white-space: nowrap;
}
.tree svg {
    width: 6px;
    height: 6px;
}
.tree .caret {
    width: 4px;
    height: 4px;
    color: #aaa;
    flex: none;
}
.tree .level1 { padding-left: 7px; }
.tree .level2 { padding-left: 13px; }
.tree .level3 { padding-left: 19px; }
.tree.files .level3 {
    margin-left: 17px;
    padding-left: 2px;
}
.tree .green { color: #8aa255; }
.dir svg { color: #6f9fb0; }
.action svg { color: #d08a4c; }
.cyan svg { color: #62a5b5; }
.input span { color: #8aa255; }
.brown svg { color: #a08058; }
.orange-icon svg { color: #d88a48; }
.steps .tree .level1 {
    margin-left: 6px;
    padding-left: 1px;
}
.tree .out {
    color: #d88a48;
}
.chip {
    display: flex;
    align-items: center;
    gap: 3px;
    padding: 0 2px;
    background: #2c2c2c;
}
.tree li.selected, .groups li.selected {
    background: #3f9bfa;
    color: #fff;
}
.tree .selected svg {
    color: #fff;
}
.selected .hole {
    fill: #3f9bfa;
}

/* action groups */
.group-list {
    height: 143px;
    overflow: hidden;
    flex: none;
}
.groups {
    display: grid;
    grid-auto-rows: 1fr;
    height: 151px;
    padding-top: 1px;
}
.groups li {
    display: flex;
    align-items: center;
    gap: 3px;
    margin-right: 3px;
    padding: 0 2px 0 9px;
    font-weight: 600;
    -webkit-text-fill-color: #d8d8d8;
}
.groups svg {
    width: 7px;
    height: 7px;
}
.groups span {
    min-width: 8px;
    margin-left: auto;
    padding: 0 2px;
    border: 1px solid #888;
    border-radius: 4px;
    text-align: center;
}
.groups .selected span {
    border-color: #d8eaff;
}
.toolbar.filter {
    border-top: 1px solid #3a3a3a;
}
.palette {
    display: grid;
    grid-template-columns: repeat(4, 1fr);
    padding: 7px 4px 0 2px;
}
.palette button {
    flex-direction: column;
    padding-bottom: 8px;
    gap: 1px;
    white-space: normal;
    -webkit-text-fill-color: #d0d0d0;
}
.palette svg {
    width: 18px;
    height: 18px;
}
.palette .while {
    width: 22px;
}

/* properties */
.form {
    width: 146px;
    padding: 8px 2px 0 3px;
}
.form h2 {
    display: flex;
    align-items: center;
    gap: 5px;
    margin: 0 0 2px;
    font-size: 6px;
    line-height: 7px;
    font-weight: 600;
    white-space: nowrap;
}
.form h2::before, .form h2::after {
    content: "";
    width: 3px;
    height: 1px;
    background: #2c2c2c;
}
.form h2::after {
    flex: 1;
}
.field {
    display: flex;
    align-items: center;
    gap: 4px;
    min-height: 12px;
}
.field label {
    width: 30px;
    text-align: right;
    color: #3b8eea;
}
.select {
    display: flex;
    align-items: center;
    gap: 2px;
    flex: 1;
    height: 8px;
    border-bottom: 1px solid #383838;
}
.select select {
    appearance: none;
    flex: 1;
}
.select svg {
    width: 4px;
    height: 4px;
    stroke-width: 4;
}
.type {
    color: #80c8c0;
    font-size: 7px;
    font-weight: 900;
}
.field input {
    appearance: none;
    position: relative;
    width: 6px;
    height: 6px;
    margin-left: 34px;
    border-radius: 1px;
    background: #3f9bfa;
}
.field input:checked::after {
    content: "";
    position: absolute;
    left: 2px;
    top: 1px;
    width: 2px;
    height: 3px;
    border: solid #fff;
    border-width: 0 1px 1px 0;
    transform: rotate(45deg);
}
.field input + label {
    width: auto;
}

/* status bar */
.statusbar {
    display: flex;
    height: 12px;
    background: #262626;
    flex: none;
}
.cell {
    display: flex;
    align-items: center;
    gap: 6px;
    padding: 0 4px;
    border-right: 1px solid #383838;
}
.cell.compact {
    gap: 5px;
    padding: 0 3px;
}
.cell.target {
    gap: 3px;
    padding-right: 2px;
}
.cell.push, .cell:last-child {
    border-right: none;
}
.cell svg {
    width: 7px;
    height: 7px;
}
.dot {
    width: 5px;
    height: 5px;
    border-radius: 50%;
    background: #8fe23c;
}

/* windows taskbar */
.taskbar {
    display: grid;
    grid-template-columns: 1fr auto 1fr;
    align-items: center;
    height: 17px;
    background: #dde1ee;
    color: #333;
    flex: none;
}
.taskbar svg {
    width: 9px;
    height: 9px;
    stroke: none;
}
.taskbar .line {
    stroke: #333;
}
.widget {
    display: flex;
    align-items: center;
    gap: 2px;
    padding-left: 7px;
}
.widget span {
    color: #c8342c;
}
.dock {
    display: flex;
    align-items: center;
    height: 17px;
}
.dock button {
    position: relative;
    justify-content: center;
    width: 16px;
    height: 14px;
}
.open::after {
    content: "";
    position: absolute;
    bottom: 0;
    width: 2px;
    height: 1px;
    background: #777;
}
.dock .snip {
    background: #f6dede;
    border-radius: 2px;
}
.dock .current {
    background: #f4f6fb;
    border-radius: 2px;
}
.current::after {
    width: 6px;
    background: #1479c9;
}
.adobe::before {
    content: "";
    position: absolute;
    width: 9px;
    height: 9px;
    border-radius: 1px;
    z-index: -1;
}
.dock .adobe {
    z-index: 0;
    font-weight: 700;
}
.dock .xd { color: #ff61f6; }
.xd::before { background: #470137; }
.dock .ai { color: #ff9a00; }
.ai::before { background: #330000; }
.search {
    display: flex;
    align-items: center;
    gap: 3px;
    width: 78px;
    height: 11px;
    margin: 0 1px;
    padding: 0 1px 0 4px;
    border-radius: 6px;
    background: #f4f6fb;
}
.search svg:first-child {
    width: 6px;
    height: 6px;
}
.search input {
    flex: 1;
}
.search input::placeholder {
    color: #555;
}
.tray {
    display: flex;
    align-items: center;
    justify-content: flex-end;
    gap: 5px;
    padding-right: 6px;
}
.tray svg {
    width: 6px;
    height: 6px;
}
.network {
    display: flex;
    gap: 3px;
    margin: 0 2px;
}
.clock {
    text-align: right;
}
```
